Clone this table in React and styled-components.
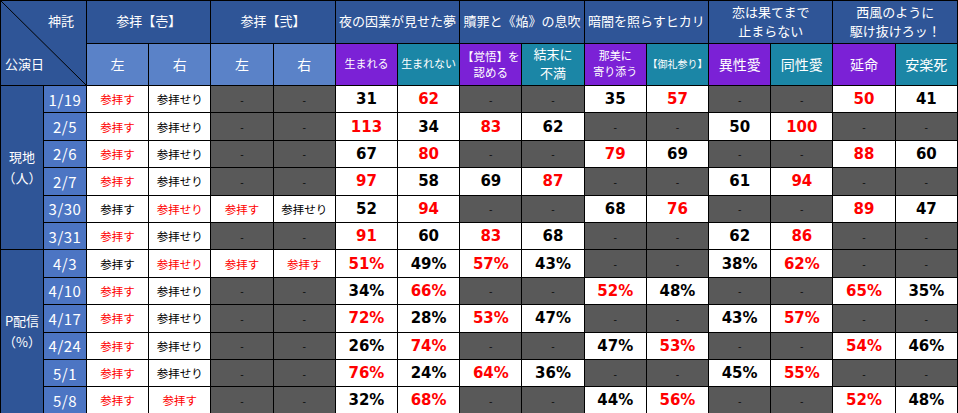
import styled, { createGlobalStyle } from 'styled-components';

const GlobalStyle = createGlobalStyle`
  html, body {
    margin: 0;
    padding: 0;
    background: #ffffff;
  }
  body {
    font-family: "Noto Sans CJK JP", "Noto Sans", sans-serif;
  }
`;

// 色
const DARK = '#2f5597';
const LIGHT = '#5a82c8';
const DATE = '#4c75c3';
const PURPLE = '#7b21d6';
const TEAL = '#1b86a6';
const GRAY = '#595959';

const groups = [
  { label: '参拝【壱】', size: 13 },
  { label: '参拝【弐】', size: 13 },
  { label: '夜の因業が見せた夢', size: 13 },
  { label: '贖罪と《焔》の息吹', size: 13 },
  { label: '暗闇を照らすヒカリ', size: 13 },
  { label: '恋は果てまで\n止まらない', size: 13 },
  { label: '西風のように\n駆け抜けろッ！', size: 13 },
];

const choices = [
  { label: '左', bg: LIGHT, size: 14 },
  { label: '右', bg: LIGHT, size: 14 },
  { label: '左', bg: LIGHT, size: 14 },
  { label: '右', bg: LIGHT, size: 14 },
  { label: '生まれる', bg: PURPLE, size: 11 },
  { label: '生まれない', bg: TEAL, size: 11 },
  { label: '【覚悟】を\n認める', bg: PURPLE, size: 11.5 },
  { label: '結末に\n不満', bg: TEAL, size: 13 },
  { label: '那美に\n寄り添う', bg: PURPLE, size: 11 },
  { label: '【御礼参り】', bg: TEAL, size: 10 },
  { label: '異性愛', bg: PURPLE, size: 14 },
  { label: '同性愛', bg: TEAL, size: 14 },
  { label: '延命', bg: PURPLE, size: 14 },
  { label: '安楽死', bg: TEAL, size: 14 },
];

// r = 赤字, null = 該当なし
const S = '参拝す';
const T = '参拝せり';
const sections = [
  {
    label: '現地\n（人）',
    rows: [
      ['1/19', [S, 1], [T], null, null, [31], [62, 1], null, null, [35], [57, 1], null, null, [50, 1], [41]],
      ['2/5', [S, 1], [T], null, null, [113, 1], [34], [83, 1], [62], null, null, [50], [100, 1], null, null],
      ['2/6', [S, 1], [T], null, null, [67], [80, 1], null, null, [79, 1], [69], null, null, [88, 1], [60]],
      ['2/7', [S, 1], [T], null, null, [97, 1], [58], [69], [87, 1], null, null, [61], [94, 1], null, null],
      ['3/30', [S], [T, 1], [S, 1], [T], [52], [94, 1], null, null, [68], [76, 1], null, null, [89, 1], [47]],
      ['3/31', [S, 1], [T], null, null, [91, 1], [60], [83, 1], [68], null, null, [62], [86, 1], null, null],
    ],
  },
  {
    label: 'P配信\n（%）',
    rows: [
      ['4/3', [S], [T, 1], [S, 1], [S, 1], ['51%', 1], ['49%'], ['57%', 1], ['43%'], null, null, ['38%'], ['62%', 1], null, null],
      ['4/10', [S, 1], [T], null, null, ['34%'], ['66%', 1], null, null, ['52%', 1], ['48%'], null, null, ['65%', 1], ['35%']],
      ['4/17', [S, 1], [T], null, null, ['72%', 1], ['28%'], ['53%', 1], ['47%'], null, null, ['43%'], ['57%', 1], null, null],
      ['4/24', [S, 1], [T], null, null, ['26%'], ['74%', 1], null, null, ['47%'], ['53%', 1], null, null, ['54%', 1], ['46%']],
      ['5/1', [S, 1], [T], null, null, ['76%', 1], ['24%'], ['64%', 1], ['36%'], null, null, ['45%'], ['55%', 1], null, null],
      ['5/8', [S, 1], [S, 1], null, null, ['32%'], ['68%', 1], null, null, ['44%'], ['56%', 1], null, null, ['52%', 1], ['48%']],
    ],
  },
];

function App() {
  return (
    <>
      <GlobalStyle />
      <Table>
        <colgroup>
          <col style={{ width: 43 }} />
          <col style={{ width: 43 }} />
          {choices.map((_, i) => (
            <col key={i} />
          ))}
        </colgroup>
        <thead>
          <HeadRow>
            <CornerCell colSpan={2} rowSpan={2}>
              <Diagonal viewBox="0 0 100 100" preserveAspectRatio="none">
                <line x1="0" y1="0" x2="100" y2="100" stroke="#000" strokeWidth="1" vectorEffect="non-scaling-stroke" />
              </Diagonal>
              <CornerInner>
                <CornerTop>神託</CornerTop>
                <CornerBottom>公演日</CornerBottom>
              </CornerInner>
            </CornerCell>
            {groups.map((g) => (
              <HeadCell key={g.label} colSpan={2} $bg={DARK} $size={g.size}>
                {g.label}
              </HeadCell>
            ))}
          </HeadRow>
          <HeadRow>
            {choices.map((c, i) => (
              <HeadCell key={i} $bg={c.bg} $size={c.size}>
                {c.label}
              </HeadCell>
            ))}
          </HeadRow>
        </thead>
        <tbody>
          {sections.map((sec) =>
            sec.rows.map(([date, ...cells], ri) => (
              <BodyRow key={date}>
                {ri === 0 && <SectionCell rowSpan={sec.rows.length}>{sec.label}</SectionCell>}
                <DateCell>{date}</DateCell>
                {cells.map((cell, ci) => {
                  if (!cell) return <EmptyCell key={ci}>-</EmptyCell>;
                  const [value, red] = cell;
                  return typeof value === 'string' && value.startsWith('参拝') ? (
                    <WordCell key={ci} $red={!!red}>{value}</WordCell>
                  ) : (
                    <NumCell key={ci} $red={!!red}>{value}</NumCell>
                  );
                })}
              </BodyRow>
            ))
          )}
        </tbody>
      </Table>
    </>
  );
}

export default App;

const Table = styled.table`
  width: 958px;
  height: 413px;
  border-collapse: collapse;
  table-layout: fixed;
  font-family: "Noto Sans CJK JP", "Noto Sans", sans-serif;

  td, th {
    border: 1px solid #000;
    padding: 0;
    text-align: center;
    vertical-align: middle;
    overflow: hidden;
  }
`;

const HeadRow = styled.tr`
  height: 42px;
`;

const BodyRow = styled.tr`
  height: 27.4px;
`;

const CornerCell = styled.th`
  position: relative;
  background: ${DARK};
  color: #fff;
  font-weight: normal;
`;

const Diagonal = styled.svg`
  position: absolute;
  inset: 0;
  width: 100%;
  height: 100%;
`;

const CornerInner = styled.div`
  height: 84px;
  display: flex;
  flex-direction: column;
  justify-content: space-between;
  padding: 10px 12px 12px 4px;
  box-sizing: border-box;
  font-size: 13px;
`;

const CornerTop = styled.div`
  text-align: right;
`;

const CornerBottom = styled.div`
  text-align: left;
`;

const HeadCell = styled.th`
  background: ${(p) => p.$bg};
  color: #fff;
  font-weight: normal;
  font-size: ${(p) => p.$size}px;
  line-height: 1.45;
  white-space: pre-line;
`;

const SectionCell = styled.td`
  background: ${DARK};
  color: #fff;
  font-size: 13px;
  line-height: 1.6;
  white-space: pre-line;
`;

const DateCell = styled.td`
  background: ${DATE};
  color: #fff;
  font-size: 15px;
  letter-spacing: 0.5px;
`;

const EmptyCell = styled.td`
  background: ${GRAY};
  color: #000;
  font-size: 10px;
`;

const WordCell = styled.td`
  background: #fff;
  color: ${(p) => (p.$red ? '#ff0000' : '#000')};
  font-size: 11.5px;
`;

const NumCell = styled.td`
  background: #fff;
  color: ${(p) => (p.$red ? '#ff0000' : '#000')};
  font-family: "DejaVu Sans", Verdana, sans-serif;
  font-weight: bold;
  font-size: 15px;
`;
